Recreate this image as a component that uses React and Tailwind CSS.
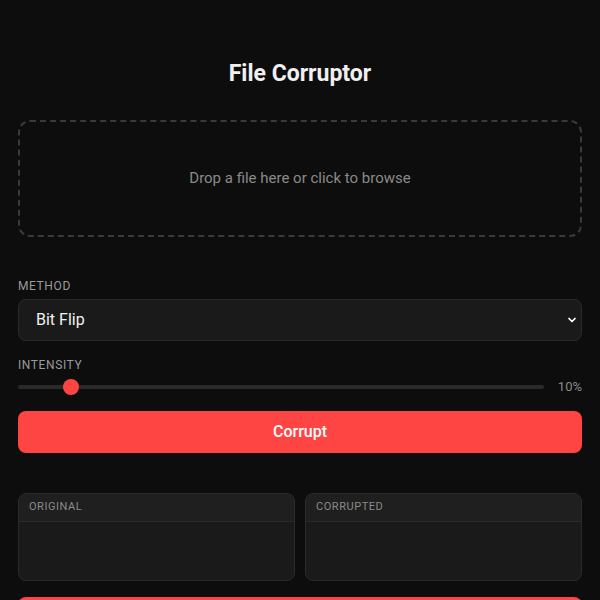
import React, { useState } from "react";
import { ChevronDown } from "lucide-react";

const Panel = ({ label }) => (
  <div className="flex-1 rounded-lg border border-[#2a2a2a] bg-[#1a1a1a] overflow-hidden">
    <div className="h-[28px] px-[10px] flex items-center bg-[#1f1f1f] border-b border-[#2a2a2a] text-[11px] tracking-wider text-[#8a8a8a] uppercase">
      {label}
    </div>
    <div className="h-[58px]"></div>
  </div>
);

export default function App() {
  const [intensity] = useState(10);

  return (
    <div
      className="min-h-screen bg-[#0d0d0d] text-[#eeeeee]"
      style={{ fontFamily: "Roboto, 'Liberation Sans', sans-serif" }}
    >
      <div className="px-[18px] pt-[60px] flex flex-col">
        <h1 className="text-[23px] leading-[28px] font-bold text-center text-[#f0f0f0]">
          File Corruptor
        </h1>

        <div className="mt-8 h-[117px] rounded-xl border-2 border-dashed border-[#3a3a3a] flex items-center justify-center text-[15px] text-[#8a8a8a]">
          Drop a file here or click to browse
        </div>

        <label className="mt-[41px] text-xs leading-4 tracking-wider text-[#9a9a9a] uppercase">
          Method
        </label>
        <div className="relative mt-[5px]">
          <div className="h-[42px] rounded-lg border border-[#2a2a2a] bg-[#1a1a1a] flex items-center pl-[17px] text-base text-[#f0f0f0]">
            Bit Flip
          </div>
          <ChevronDown
            size={12}
            strokeWidth={3.5}
            className="absolute right-[4px] top-[15px] text-white"
          />
        </div>

        <label className="mt-4 text-xs leading-4 tracking-wider text-[#9a9a9a] uppercase">
          Intensity
        </label>
        <div className="mt-[6px] h-4 flex items-center gap-[14px]">
          <div className="relative flex-1 h-[4px] rounded-full bg-[#2a2a2a]">
            <div
              className="absolute top-1/2 w-4 h-4 -mt-2 -ml-2 rounded-full bg-[#ff4444]"
              style={{ left: `${intensity}%` }}
            ></div>
          </div>
          <span className="text-[13px] text-[#8a8a8a]">{intensity}%</span>
        </div>

        <button className="mt-4 h-[42px] rounded-lg bg-[#ff4444] text-white text-base font-medium">
          Corrupt
        </button>

        <div className="mt-10 flex gap-[10px]">
          <Panel label="Original" />
          <Panel label="Corrupted" />
        </div>

        <button className="mt-4 h-[42px] rounded-lg bg-[#ff4444] text-white text-base font-medium">
          Download
        </button>
      </div>
    </div>
  );
}
